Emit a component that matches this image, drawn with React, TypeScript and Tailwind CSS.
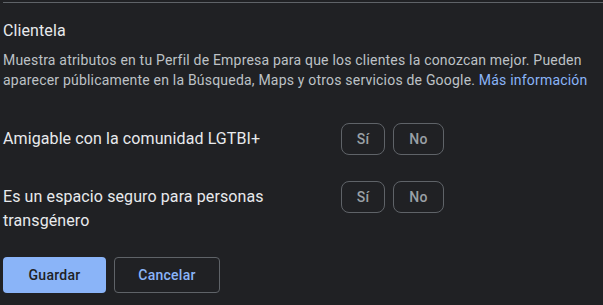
const options = ["Sí", "No"];

const attributes = [
  { label: "Amigable con la comunidad LGTBI+", multiline: false },
  { label: "Es un espacio seguro para personas transgénero", multiline: true },
];

function ChoiceButton({ text }: { text: string }) {
  return (
    <button
      className={
        "flex h-8 items-center justify-center rounded-lg border border-[#5f6368] text-sm font-medium tracking-[0.25px] text-[#9aa0a6] " +
        (text === "Sí" ? "w-[44px]" : "w-[51px]")
      }
    >
      {text}
    </button>
  );
}

export default function App() {
  return (
    <div
      className="h-[305px] w-[603px] overflow-hidden bg-[#202124] pl-[3px] pt-[2px]"
      style={{ fontFamily: "Roboto, 'Noto Sans', sans-serif" }}
    >
      <div className="border-t border-[#5f6368]">
        {/* Header */}
        <h2 className="mt-4 text-base leading-6 tracking-[0.1px] text-[#e8eaed]">Clientela</h2>
        <p className="mt-[7px] text-sm leading-5 tracking-[0.2px] text-[#bdc1c6]">
          Muestra atributos en tu Perfil de Empresa para que los clientes la conozcan mejor. Pueden
          aparecer públicamente en la Búsqueda, Maps y otros servicios de Google.{" "}
          <span className="text-[#8ab4f8]">Más información</span>
        </p>

        {/* Attributes */}
        <div className="mt-[33px] flex flex-col gap-[26px]">
          {attributes.map((attr) => (
            <div key={attr.label} className={"flex " + (attr.multiline ? "items-start" : "items-center")}>
              <div
                className={
                  "w-[338px] pr-16 text-base leading-6 tracking-[0.1px] text-[#e8eaed] " +
                  (attr.multiline ? "pt-1" : "")
                }
              >
                {attr.label}
              </div>
              <div className="flex gap-2">
                {options.map((o) => (
                  <ChoiceButton key={o} text={o} />
                ))}
              </div>
            </div>
          ))}
        </div>

        {/* Actions */}
        <div className="mt-6 flex gap-2">
          <button className="h-9 w-[103px] rounded bg-[#8ab4f8] text-sm font-medium tracking-[0.25px] text-[#202124]">
            Guardar
          </button>
          <button className="h-9 w-[106px] rounded border border-[#5f6368] text-sm font-medium tracking-[0.25px] text-[#8ab4f8]">
            Cancelar
          </button>
        </div>
      </div>
    </div>
  );
}
